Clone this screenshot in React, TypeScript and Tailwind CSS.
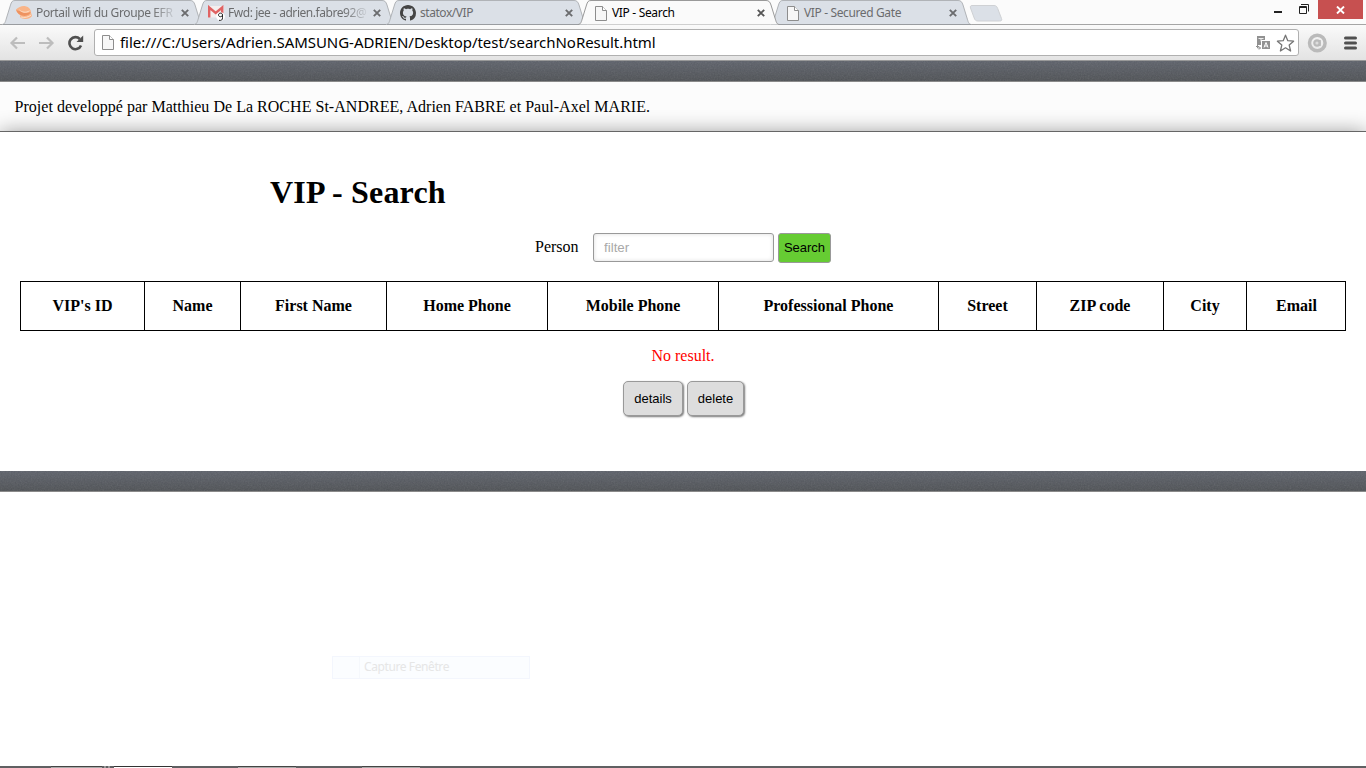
import React from 'react';

const tabs = [
  { title: 'Portail wifi du Groupe EFR', icon: 'shell', spacing: 'tracking-[-0.38px]', fade: true },
  { title: 'Fwd: jee - adrien.fabre92@', icon: 'mail', spacing: 'tracking-[-0.45px]', fade: true },
  { title: 'statox/VIP', icon: 'github', spacing: 'tracking-[-0.45px]' },
  { title: 'VIP - Search', icon: 'page', spacing: 'tracking-[-0.33px]', active: true },
  { title: 'VIP - Secured Gate', icon: 'page', spacing: 'tracking-[-0.37px]' },
];

const columns = [
  { label: "VIP's ID", width: 'w-[124px]' },
  { label: 'Name', width: 'w-[96px]' },
  { label: 'First Name', width: 'w-[146px]' },
  { label: 'Home Phone', width: 'w-[161px]' },
  { label: 'Mobile Phone', width: 'w-[171px]' },
  { label: 'Professional Phone', width: 'w-[220px]' },
  { label: 'Street', width: 'w-[98px]' },
  { label: 'ZIP code', width: 'w-[127px]' },
  { label: 'City', width: 'w-[83px]' },
  { label: 'Email', width: 'w-[99px]' },
];

function PageIcon() {
  return (
    <svg className="block" width="12" height="15" viewBox="0 0 12 15">
      <path d="M.5.5h7l4 4v10H.5z" fill="#f7f7f7" stroke="#8d8d8d" />
      <path d="M7.5.5v4h4" fill="#fff" stroke="#8d8d8d" />
    </svg>
  );
}

function TabIcon({ kind }: { kind: string }) {
  if (kind === 'shell')
    return (
      <svg width="16" height="16" viewBox="0 0 16 16">
        <path d="M0 4.500C3 2 6 .6 9.500 1.300c3.500.7 5.500 3 5.500 6.200l1 3.500c-1.500 2.500-5 3.500-8 2.800C4 13 3.500 11.500 4.500 10.200 2 9 .5 7 0 4.500z" fill="#f9b488" />
        <path d="M0 4.500c1.500 1.300 3 1.500 4.500 1.300 3 2.700 7 3 10.300 1-.8 3-4 4.500-7.800 4C3.500 10.200 1 8 0 4.500z" fill="#ee9361" />
        <path d="M3.500 5c2.500 2.500 6.500 3 10 .8M5 12c3.500 1 7.500.3 10-2" fill="none" stroke="#fde0ca" />
      </svg>
    );
  if (kind === 'mail')
    return (
      <svg width="17" height="17" viewBox="0 0 17 17">
        <path d="M0 1h15.500v11.500H0z" fill="#f4efef" />
        <path d="M1.200 12.500V2.500l6.500 5.500 6.500-5.500v6" fill="none" stroke="#e06363" strokeWidth="2.400" />
        <circle cx="12.600" cy="11.500" r="4.300" fill="#fff" />
        <path d="M14.500 10c0-2.500-4-2.500-4 0 0 2.300 4 2.300 4-.2v3c0 2-1 3-3.500 2.500" fill="none" stroke="#222" />
      </svg>
    );
  if (kind === 'github')
    return (
      <svg width="16" height="16" viewBox="0 0 16 16">
        <path fill="#444" d="M8 0C3.580 0 0 3.580 0 8c0 3.540 2.290 6.530 5.470 7.590.4.070.55-.17.55-.38 0-.19-.01-.82-.01-1.490-2.010.37-2.530-.49-2.690-.94-.09-.23-.48-.94-.82-1.130-.28-.15-.68-.52-.01-.53.63-.01 1.080.58 1.230.82.72 1.210 1.870.87 2.330.66.07-.52.28-.87.51-1.070-1.780-.2-3.640-.89-3.640-3.950 0-.87.31-1.590.82-2.150-.08-.2-.36-1.020.08-2.120 0 0 .67-.21 2.200.82.64-.18 1.320-.27 2-.27s1.360.09 2 .27c1.530-1.040 2.200-.82 2.200-.82.44 1.100.16 1.920.08 2.120.51.56.82 1.270.82 2.150 0 3.070-1.870 3.750-3.650 3.950.29.25.54.73.54 1.480 0 1.070-.01 1.930-.01 2.200 0 .21.15.46.55.38A8.010 8.010 0 0 0 16 8c0-4.420-3.580-8-8-8z" />
      </svg>
    );
  return <div className="pl-[3px]"><PageIcon /></div>;
}

type TabProps = { title: string; icon: string; spacing: string; active?: boolean; fade?: boolean };

function Tab({ title, icon, spacing, active, fade }: TabProps) {
  return (
    <div className={`relative h-[25px] w-48 shrink-0 ${active ? 'z-10' : ''}`}>
      <svg className="absolute top-0 left-0" width="202" height="25" viewBox="0 0 202 25">
        <path
          d="M0 24.500C3 24.500 3.500 21 4.500 18L8.500 5C9.500 2 10 .5 13 .5h175c3 0 4 1.500 5 4.500l4 13c1 3 1.500 6.500 4.500 6.500z"
          fill={active ? '#fafafa' : '#dbe0e7'}
        />
        <path
          d="M0 24.500C3 24.500 3.500 21 4.500 18L8.500 5C9.500 2 10 .5 13 .5h175c3 0 4 1.500 5 4.500l4 13c1 3 1.500 6.500 4.500 6.500"
          fill="none"
          stroke={active ? '#999' : '#b0b3b7'}
        />
        {!active && <path d="M1 24.500h200" stroke="#999ca0" />}
      </svg>
      <div className="relative flex h-[25px] items-center pt-px pl-[14px]">
        <div className="w-5 shrink-0"><TabIcon kind={icon} /></div>
        <div
          className={`w-[139px] text-[12px] whitespace-nowrap ${spacing} ${active ? 'text-black' : 'text-[#6b6c6e]'} ${fade ? '[mask-image:linear-gradient(to_right,#000_116px,transparent_142px)]' : ''}`}
        >
          {title}
        </div>
        <svg className="ml-[6px]" width="8" height="8" viewBox="0 0 8 8">
          <path d="M.8.800l6.400 6.400M7.200.800L.8 7.200" stroke={active ? '#555' : '#6b6c6e'} strokeWidth="1.900" />
        </svg>
      </div>
    </div>
  );
}

function Arrow({ flip }: { flip?: boolean }) {
  return (
    <svg className={flip ? 'scale-x-[-1]' : ''} width="16" height="14" viewBox="0 0 16 14">
      <path d="M8 1.500L2.500 7 8 12.500M2.500 7H16" fill="none" stroke="#bdbdbd" strokeWidth="2.200" />
    </svg>
  );
}

function Band({ id }: { id: string }) {
  return (
    <div className="h-[21px] shrink-0 border-b border-[#8a8a8a] bg-linear-to-b from-[#5d616a] to-[#4e5155]">
      <svg className="block opacity-15" width="1366" height="20">
        <filter id={id} x="0" y="0" width="1" height="1">
          <feTurbulence type="fractalNoise" baseFrequency="0.7" numOctaves="2" seed="4" />
          <feColorMatrix type="saturate" values="0" />
        </filter>
        <rect width="1366" height="20" filter={`url(#${id})`} />
      </svg>
    </div>
  );
}

function Browser() {
  return (
    <div className="font-['Noto_Sans','Open_Sans',sans-serif]">
      <div className="flex h-[25px] items-start bg-[#fbfbfb] pl-0.5 shadow-[inset_0_-1px_#a5a5a5]">
        {tabs.map((t) => <Tab key={t.title} {...t} />)}
        <svg className="mt-[5px] ml-[7px]" width="34" height="17" viewBox="0 0 34 17">
          <path d="M3 .5h22c2 0 3 1 3.700 3l3.800 10c.7 2-.2 2.500-2 2.500H9c-2 0-3.200-1-3.800-3L1.500 3C1 1.500 1.500.5 3 .5z" fill="#dbe0e7" stroke="#cfd1d4" />
        </svg>
        <div className="ml-auto flex h-[19px]">
          <svg width="70" height="19" viewBox="0 0 70 19" fill="none">
            <path d="M26 12h8" stroke="#222" strokeWidth="2" />
            <path d="M51.500 6.500h7v7h-7zM51 7.500h8M53 4.500h7.500v7" stroke="#222" strokeWidth="1" />
          </svg>
          <div className="flex w-[45px] items-center justify-center bg-[#c75050]">
            <svg width="9" height="8" viewBox="0 0 9 8"><path d="M1 .5l7 7M8 .5l-7 7" stroke="#fff" strokeWidth="1.900" /></svg>
          </div>
          <div className="w-[3px]" />
        </div>
      </div>
      <div className="flex h-9 items-center border-b border-[#999] bg-linear-to-b from-[#fafafa] to-[#e3e3e3] pl-[9px]">
        <Arrow />
        <div className="w-[14px]" />
        <Arrow flip />
        <svg className="ml-3" width="18" height="16" viewBox="0 0 18 16">
          <path d="M14 10.500A6 6 0 1 1 12.800 4" fill="none" stroke="#505050" strokeWidth="2.600" />
          <path d="M9.500 7h6.700V.500z" fill="#505050" />
        </svg>
        <div className="ml-[9px] flex h-[27px] w-[1205px] shrink-0 items-center rounded-[3px] border border-[#b0b0b0] bg-white pl-[7px]">
          <PageIcon />
          <div className="ml-1.5 w-[1136px] shrink-0 text-[15px] tracking-[-0.04px] whitespace-nowrap text-black">
            file:///C:/Users/Adrien.SAMSUNG-ADRIEN/Desktop/test/searchNoResult.html
          </div>
          <svg className="shrink-0" width="14" height="14" viewBox="0 0 14 14">
            <path d="M1 0h8v4H5v5H1z" fill="#919191" />
            <path d="M2.500 2.500h5M5 2.500v3" stroke="#eee" />
            <path d="M6 5h8v8H6z" fill="#919191" />
            <path d="M8 11.500l2-5 2 5M8.500 10h3" fill="none" stroke="#fff" />
            <path d="M1.500 9v3h3M3 10.500l1.500 1.500L3 13.500M0 10.500h3" fill="none" stroke="#919191" />
          </svg>
          <svg className="ml-[6px] shrink-0" width="19" height="18" viewBox="0 0 19 18">
            <path d="M9.500 1.200l2.300 5.500 5.800.5-4.400 3.900 1.400 5.900-5.100-3.200L4.400 17l1.400-5.900L1.400 7.200l5.800-.5z" fill="#fff" stroke="#757575" strokeWidth="1.300" strokeLinejoin="round" />
          </svg>
        </div>
        <svg className="ml-2 shrink-0" width="20" height="20" viewBox="0 0 20 20">
          <circle cx="10.300" cy="10" r="7.800" fill="none" stroke="#bababa" strokeWidth="3.500" />
          <circle cx="10" cy="10" r="2.700" fill="#ddd" stroke="#bababa" strokeWidth="2.200" />
          <path d="M12.800 7v6" fill="none" stroke="#bababa" strokeWidth="2" />
        </svg>
        <svg className="ml-4 shrink-0" width="15" height="14" viewBox="0 0 15 14">
          <path d="M2.500 2h10M2.500 7h10M2.500 12h10" stroke="#505050" strokeWidth="3" strokeLinecap="round" />
        </svg>
      </div>
    </div>
  );
}

export default function App() {
  return (
    <div className="flex h-[768px] w-[1366px] flex-col overflow-hidden bg-white font-['Liberation_Serif',serif] text-[16px] text-black">
      <Browser />
      <Band id="grain-top" />
      <header className="relative h-[50px] shrink-0 overflow-hidden border-b border-[#666] bg-[#fcfcfc] pt-4 pl-[14.5px] leading-[18px] tracking-[0.025px]">
        Projet developpé par Matthieu De La ROCHE St-ANDREE, Adrien FABRE et Paul-Axel MARIE.
        <div className="absolute top-[50px] left-0 h-10 w-[1366px] shadow-[0_0_20px_#999]" />
      </header>
      <main className="h-[339px] shrink-0 px-5 pt-[42px]">
        <h1 className="pl-[250px] text-[32px] leading-[37px] font-bold tracking-[0.18px]">VIP - Search</h1>
        <div className="mt-[22px] flex h-[30px] items-start pl-[515px]">
          <label className="mt-[5px] w-[58px] leading-[18px]">Person</label>
          <input
            className="h-[29px] w-[181px] rounded-[3px] border border-[#999] bg-white pl-2.5 font-['Liberation_Sans',sans-serif] text-[13.333px] shadow-[inset_0_0_4px_#ddd] placeholder:text-[#a9a9a9]"
            placeholder="filter"
          />
          <button className="ml-1 h-[30px] w-[53px] rounded-[3px] border border-[#999] bg-[#66cc33] font-['Liberation_Sans',sans-serif] text-[13px]">
            Search
          </button>
        </div>
        <div className="mt-[18px] flex h-[50px] w-[1326px] border border-black">
          {columns.map((c) => (
            <div key={c.label} className={`${c.width} flex shrink-0 items-center justify-center border-r border-black pb-px font-bold last:border-r-0`}>
              {c.label}
            </div>
          ))}
        </div>
        <p className="mt-4 text-center leading-[18px] text-[#ff0000]">No result.</p>
        <div className="mt-4 flex justify-center gap-1 pl-px font-['Liberation_Sans',sans-serif] text-[13px]">
          <button className="h-[35px] w-[60px] rounded-[5px] border border-[#999] bg-[#ddd] shadow-[1px_1px_2px_#777]">details</button>
          <button className="h-[35px] w-[57px] rounded-[5px] border border-[#999] bg-[#ddd] shadow-[1px_1px_2px_#777]">delete</button>
        </div>
      </main>
      <Band id="grain-bottom" />
      <div className="flex-1 pt-[164px] pl-[332px]">
        <div className="flex h-[23px] w-[198px] border border-[#f3f6fd] bg-[#fbfdff] font-['Noto_Sans',sans-serif] text-[12px] leading-[20px] tracking-[-0.4px] text-[#e6e6e6]">
          <div className="w-[27px] border-r border-[#f5f8fc]" />
          <span className="pl-1">Capture Fenêtre</span>
        </div>
      </div>
      <footer className="flex h-0.5 shrink-0 bg-[#606062]">
        <div className="ml-[51px] h-0.5 w-[51px] border-t border-[#444] bg-[#aaa]" />
        <div className="ml-0.5 h-0.5 w-[2px] bg-[#999]" />
        <div className="ml-0.5 h-0.5 w-[2px] bg-[#999]" />
        <div className="ml-1 h-0.5 w-[58px] border-t border-[#333] bg-white" />
        <div className="ml-[66px] h-0.5 w-[58px] border-t border-[#444] bg-[#aaa]" />
        <div className="ml-[66px] h-0.5 w-[58px] border-t border-[#444] bg-[#aaa]" />
      </footer>
    </div>
  );
}
